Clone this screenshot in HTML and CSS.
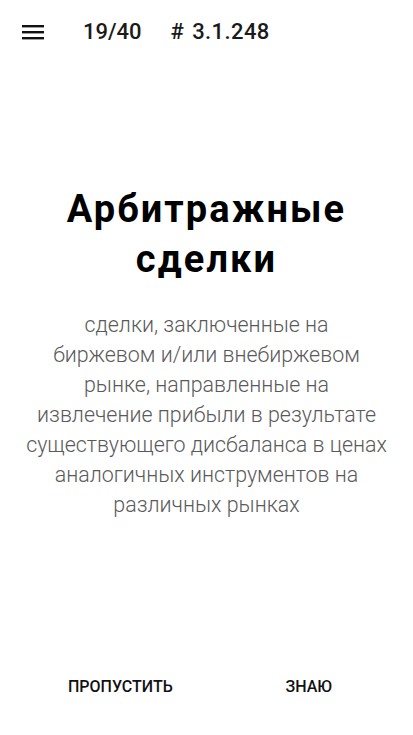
FILE: index.html
```html
<!DOCTYPE html>
<html lang="ru">
<head>
<meta charset="utf-8">
<title>Арбитражные сделки</title>
<link rel="stylesheet" href="styles.css">
</head>
<body>
<div class="screen">
  <header class="topbar">
    <svg class="menu" width="22" height="16" viewBox="0 0 22 16" aria-hidden="true">
      <rect x="0" y="1" width="22" height="2.4" fill="#111"/>
      <rect x="0" y="7" width="22" height="2.4" fill="#111"/>
      <rect x="0" y="13" width="22" height="2.4" fill="#111"/>
    </svg>
    <span class="counter">19/40</span>
    <span class="code"># 3.1.248</span>
  </header>
  <main class="card">
    <h1 class="term">Арбитражные<br>сделки</h1>
    <p class="definition">сделки, заключенные на<br>биржевом и/или внебиржевом<br>рынке, направленные на<br>извлечение прибыли в результате<br>существующего дисбаланса в ценах<br>аналогичных инструментов на<br>различных рынках</p>
  </main>
  <footer class="actions">
    <button class="action">ПРОПУСТИТЬ</button>
    <button class="action">ЗНАЮ</button>
  </footer>
</div>
</body>
</html>
```
FILE: styles.css
```css
html, body {
  margin: 0;
  padding: 0;
  background: #fff;
}
body {
  font-family: Roboto, "Noto Sans", sans-serif;
  color: #111;
}
.screen {
  width: 413px;
  height: 735px;
  display: flex;
  flex-direction: column;
}
.topbar {
  height: 64px;
  display: flex;
  align-items: center;
  padding-left: 22px;
  box-sizing: border-box;
  padding-bottom: 1px;
}
.menu {
  display: block;
  margin-right: 39px;
}
.counter, .code {
  font-size: 22px;
  font-weight: 500;
  color: #1a1a1a;
  line-height: 24px;
}
.counter {
  margin-right: 29px;
}
.code {
  word-spacing: 2px;
  letter-spacing: 0.4px;
}
.card {
  flex: 1;
  display: flex;
  flex-direction: column;
  align-items: center;
  padding-top: 120px;
}
.term {
  margin: 0;
  font-size: 38px;
  line-height: 50px;
  font-weight: 700;
  letter-spacing: 2.1px;
  text-align: center;
  color: #000;
}
.definition {
  margin: 26px 0 0;
  font-size: 21.4px;
  line-height: 30px;
  font-weight: 300;
  color: #5a5a5a;
  text-align: center;
  white-space: nowrap;
}
.actions {
  display: flex;
  justify-content: space-between;
  padding: 0 81px 38px 68px;
}
.action {
  background: none;
  border: 0;
  padding: 0;
  font-family: Roboto, "Noto Sans", sans-serif;
  font-size: 16px;
  font-weight: 500;
  color: #111;
  line-height: 20px;
}
```
